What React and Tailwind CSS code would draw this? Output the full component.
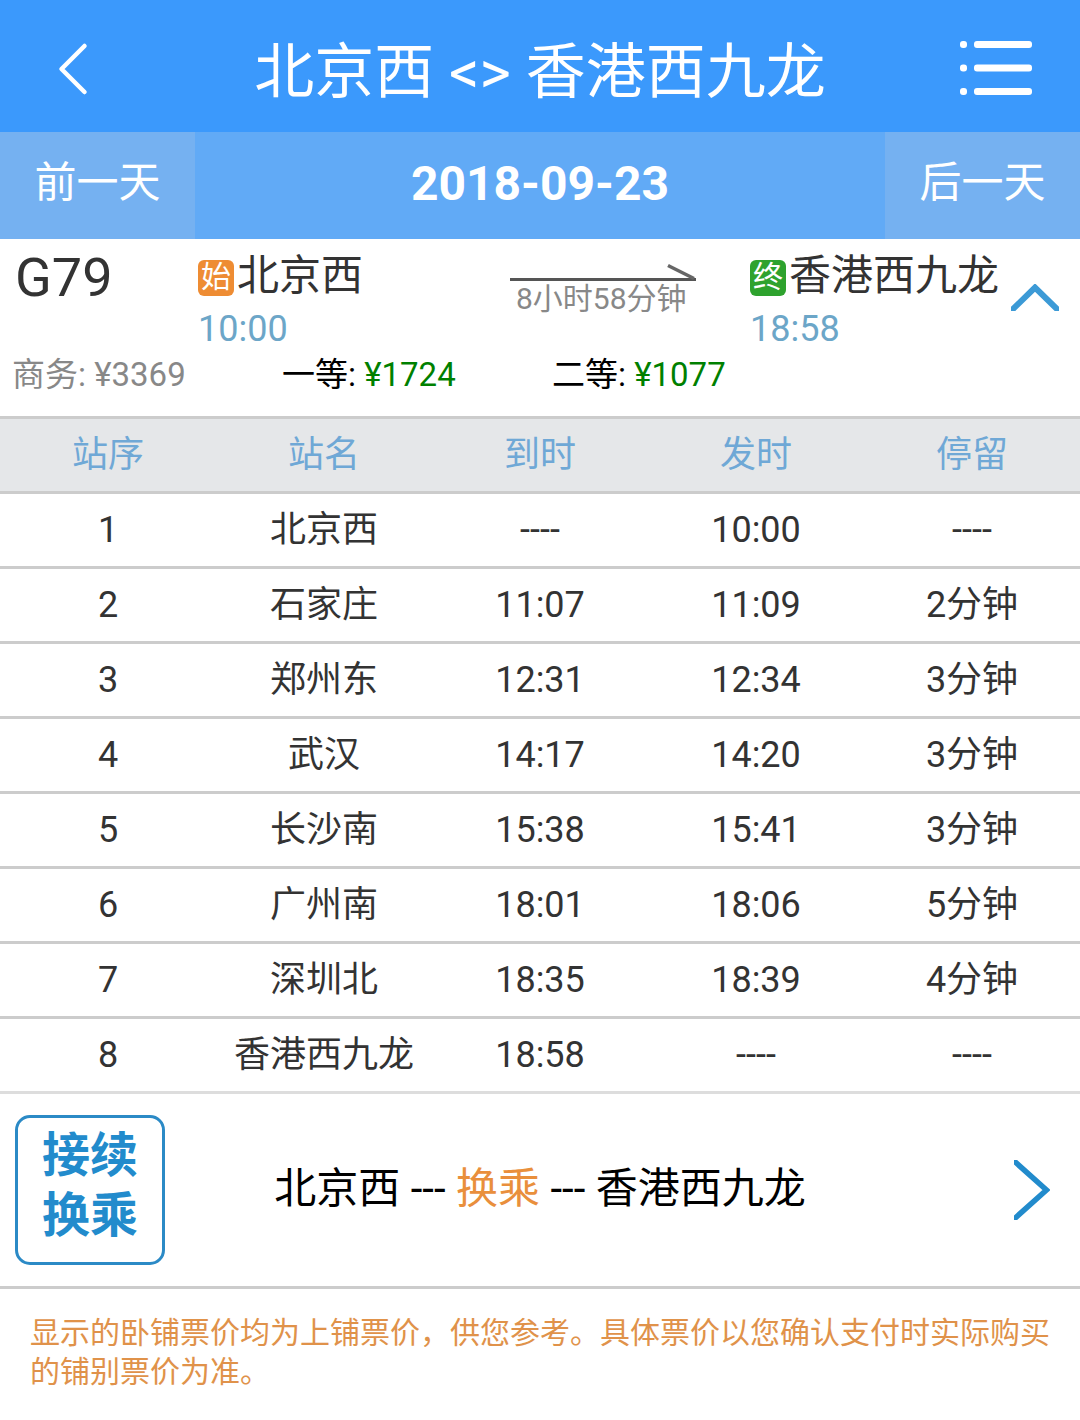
import React, { useState } from 'react';

const stops = [
  { no: 1, name: '北京西', arrive: '----', depart: '10:00', stay: '----' },
  { no: 2, name: '石家庄', arrive: '11:07', depart: '11:09', stay: '2分钟' },
  { no: 3, name: '郑州东', arrive: '12:31', depart: '12:34', stay: '3分钟' },
  { no: 4, name: '武汉', arrive: '14:17', depart: '14:20', stay: '3分钟' },
  { no: 5, name: '长沙南', arrive: '15:38', depart: '15:41', stay: '3分钟' },
  { no: 6, name: '广州南', arrive: '18:01', depart: '18:06', stay: '5分钟' },
  { no: 7, name: '深圳北', arrive: '18:35', depart: '18:39', stay: '4分钟' },
  { no: 8, name: '香港西九龙', arrive: '18:58', depart: '----', stay: '----' },
];

const Header = () => (
  <header className="flex h-[132px] items-center justify-between bg-[#3b99fc] pl-12 pr-12 text-white">
    <button className="w-[72px] pl-[10px]">
      <svg width="30" height="54" viewBox="0 0 30 54" fill="none" className="mt-[6px]">
        <path d="M26.5 4L3.5 27L26.5 50" stroke="currentColor" strokeWidth="4.5" strokeLinecap="round" strokeLinejoin="round" />
      </svg>
    </button>
    <h1 className="pt-[13px] text-[60px] leading-[72px]">北京西 &lt;&gt; 香港西九龙</h1>
    <button className="w-[72px]">
      <svg width="72" height="56" viewBox="0 0 72 56" fill="currentColor" className="mt-[4px]">
        <rect x="0" y="1" width="7" height="7" rx="3" />
        <rect x="14" y="1" width="58" height="7" rx="3" />
        <rect x="0" y="24.5" width="7" height="7" rx="3" />
        <rect x="14" y="24.5" width="58" height="7" rx="3" />
        <rect x="0" y="48" width="7" height="7" rx="3" />
        <rect x="14" y="48" width="58" height="7" rx="3" />
      </svg>
    </button>
  </header>
);

const DateBar = () => (
  <div className="flex h-[107px] bg-[#61aaf6] text-center text-white">
    <button className="w-[195px] bg-[#75b1f1] pb-[5px] text-[42px] leading-[98px]">前一天</button>
    <div className="flex-1 text-[48px] font-bold leading-[104px]">2018-09-23</div>
    <button className="w-[195px] bg-[#75b1f1] pb-[5px] text-[42px] leading-[98px]">后一天</button>
  </div>
);

const Station = ({ badge, badgeClass, name, time }) => (
  <div>
    <div className="flex h-[63px] items-center">
      <span className={`mt-[14px] mr-[3px] h-9 w-9 rounded-[6px] text-center text-[30px] leading-[34px] text-white ${badgeClass}`}>
        {badge}
      </span>
      <span className="mt-[10px] text-[42px] leading-[63px] text-[#333]">{name}</span>
    </div>
    <div className="text-[36px] leading-[54px] text-[#6ca6c8]">{time}</div>
  </div>
);

const Price = ({ label, price, soldOut }) => (
  <div className={soldOut ? 'w-[270px] text-[#888]' : 'w-[270px] text-black'}>
    {label}: <span className={soldOut ? '' : 'text-[#008000]'}>¥{price}</span>
  </div>
);

const TrainSummary = ({ open, onToggle }) => (
  <section className="h-[177px]">
    <div className="flex h-[108px]">
      <div className="w-[198px] pl-[15px] pt-[7px] text-[54px] leading-[64px] text-[#333]">G79</div>
      <div className="w-[312px]">
        <Station badge="始" badgeClass="bg-[#ee8c33]" name="北京西" time="10:00" />
      </div>
      <div className="w-[240px] pt-[24px]">
        <svg width="186" height="18" viewBox="0 0 186 18" fill="none">
          <path d="M0 16.5H186" stroke="#555" strokeWidth="3" />
          <path d="M158 2.5L184 15.5" stroke="#666" strokeWidth="3.5" />
        </svg>
        <div className="w-[186px] pl-[6px] text-[30px] leading-[35px] text-[#888]">8小时58分钟</div>
      </div>
      <div className="w-[261px]">
        <Station badge="终" badgeClass="bg-[#2ea22e]" name="香港西九龙" time="18:58" />
      </div>
      <button className="mt-[45px] h-[27px]" onClick={onToggle}>
        <svg width="48" height="27" viewBox="0 0 48 27" fill="none" className={open ? '' : 'rotate-180'}>
          <path d="M-1 28L24 3.5L49 28" stroke="#3c9ad6" strokeWidth="6" />
        </svg>
      </button>
    </div>
    <div className="flex pl-3 text-[33px] leading-[56px]">
      <Price label="商务" price="3369" soldOut />
      <Price label="一等" price="1724" />
      <Price label="二等" price="1077" />
    </div>
  </section>
);

const StopTable = () => (
  <div className="border-t-3 border-[#ccc] text-center text-[36px] leading-[72px] text-[#333]">
    <div className="grid h-[75px] grid-cols-5 border-b-3 border-[#ccc] bg-[#e5e7e9] text-[#6fa8d6]">
      <span>站序</span>
      <span>站名</span>
      <span>到时</span>
      <span>发时</span>
      <span>停留</span>
    </div>
    {stops.map((stop) => (
      <div key={stop.no} className="grid h-[75px] grid-cols-5 border-b-3 border-[#ccc] last:border-[#ddd]">
        <span>{stop.no}</span>
        <span>{stop.name}</span>
        <span>{stop.arrive}</span>
        <span>{stop.depart}</span>
        <span>{stop.stay}</span>
      </div>
    ))}
  </div>
);

const Transfer = () => (
  <div className="flex h-[195px] items-center border-b-3 border-[#ccc] pl-[15px] pr-[30px]">
    <div className="h-[150px] w-[150px] rounded-[15px] border-3 border-[#2b8ac6] pt-[8px] text-center text-[48px] leading-[60px] font-bold text-[#228bcc]">
      接续
      <br />
      换乘
    </div>
    <div className="flex-1 pb-[2px] pr-[99px] text-center text-[42px] leading-[60px] text-black">
      北京西 --- <span className="text-[#e98f3c]">换乘</span> --- 香港西九龙
    </div>
    <svg width="36" height="60" viewBox="0 0 36 60" fill="none">
      <path d="M-1 0L32.5 30L-1 60" stroke="#228bcc" strokeWidth="5.5" />
    </svg>
  </div>
);

export default function App() {
  const [open, setOpen] = useState(true);

  return (
    <div className="h-[1420px] w-[1080px] overflow-hidden bg-white font-[Roboto,'Noto_Sans_CJK_SC',sans-serif]">
      <Header />
      <DateBar />
      <TrainSummary open={open} onToggle={() => setOpen(!open)} />
      {open && <StopTable />}
      <Transfer />
      <p className="px-[30px] pt-[24px] text-[30px] leading-[39px] text-[#e0924a]">
        显示的卧铺票价均为上铺票价，供您参考。具体票价以您确认支付时实际购买的铺别票价为准。
      </p>
    </div>
  );
}
